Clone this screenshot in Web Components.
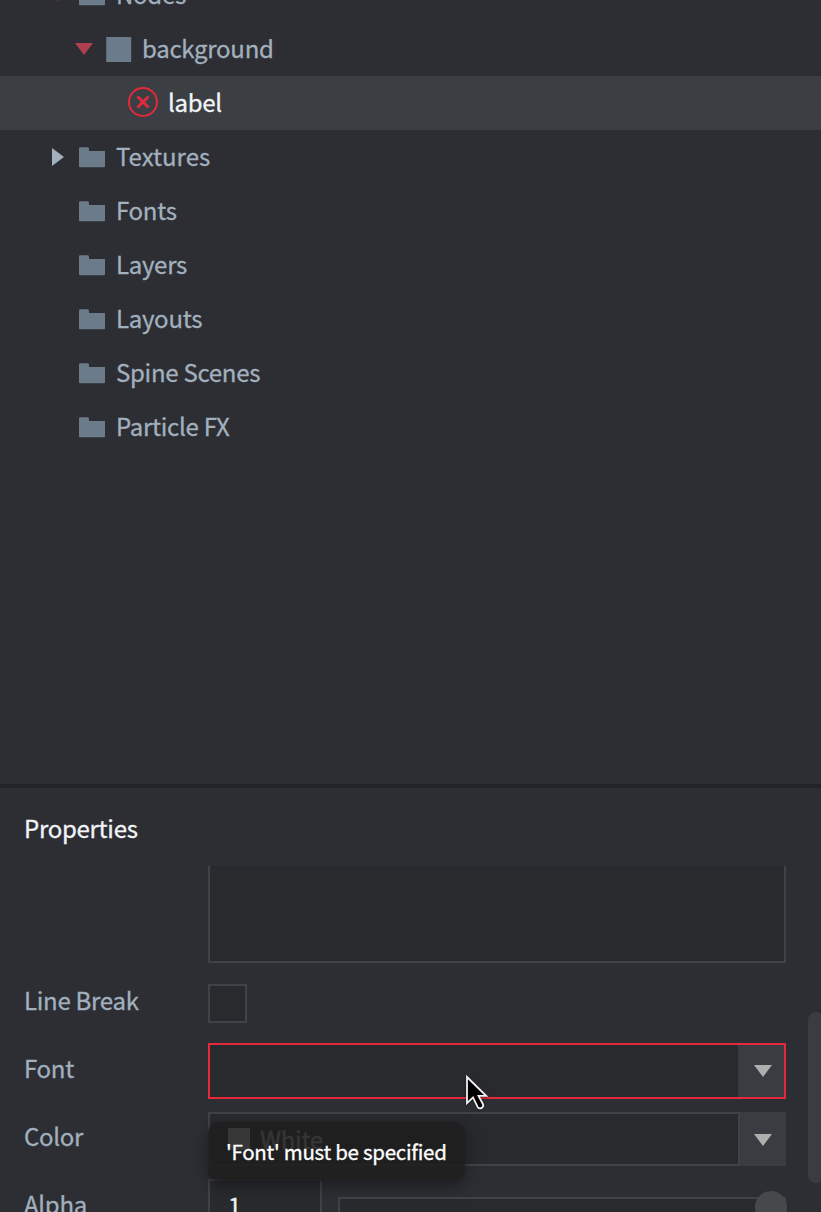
<!DOCTYPE html>
<html lang="en">
<head>
<meta charset="utf-8">
<title>Outline and Properties</title>
<style>
  html, body { margin: 0; height: 100%; overflow: hidden; background: #2d2e33; }
  body { font: 24px/54px "Noto Sans CJK SC", "Noto Sans", sans-serif; color: #a2b0be; letter-spacing: -.28px; -webkit-text-stroke: .3px currentColor; }
</style>
</head>
<body>
<editor-app></editor-app>
<script>
const define = (name, html, setup) => customElements.define(name, class extends HTMLElement {
  constructor() {
    super();
    this.attachShadow({ mode: "open" }).innerHTML = html;
  }
  connectedCallback() { if (setup) setup(this, this.shadowRoot); }
});

const glyphs = {
  folder: '<svg width="26" height="21" viewBox="0 0 26 21"><path fill="#6b7b8a" d="M0 1.4Q0 .3 1.2 .3H8.6Q9.7 .3 9.9 1.6L10.1 4H26V19.2Q26 20.3 25 20.3H1Q0 20.3 0 19.2Z"/></svg>',
  box: '<svg width="26" height="25" viewBox="0 0 26 25"><path fill="#6b7b8a" d="M.2 0H25.2V25H.2Z"/></svg>',
  error: '<svg width="30" height="30" viewBox="0 0 30 30" fill="none" stroke="#e4293b"><circle cx="15" cy="15" r="14" stroke-width="2"/><path stroke-width="2.8" stroke-linecap="round" d="M10.2 10.2l9.6 9.6M19.8 10.2l-9.6 9.6"/></svg>'
};

define("node-icon", '<style>:host{display:flex;flex:none}svg{display:block}</style>',
  (el, root) => root.innerHTML += glyphs[el.getAttribute("kind")]);

define("fold-arrow", `<style>
  :host{display:flex;width:18px;height:18px;align-items:center;justify-content:center;flex:none;color:#a2b0be}
  :host([tone=error]){color:#b04050}
  :host([tone=field]){color:#aeaeae}
  svg{display:none}
  :host([dir=down]) .d,:host([dir=right]) .r{display:block}
</style><svg class="d" width="18" height="12"><path fill="currentColor" d="M0 0H18L9 12Z"/></svg>
<svg class="r" width="12" height="18"><path fill="currentColor" d="M0 0L12 9L0 18Z"/></svg>`);

define("tree-item", `<style>
  :host{display:flex;height:54px;align-items:center;box-sizing:border-box;padding-left:calc(49px + var(--depth,0)*26px)}
  :host([selected]){background:#3b3e42;color:#f2f4f7}
  :host([wide]){letter-spacing:0}
  fold-arrow{margin-right:12px}
  .name{margin-left:11px;line-height:52px;height:54px;white-space:nowrap}
  :host([selected]) .name{margin-left:10px}
  node-icon{padding-top:1px}
  :host([kind=error]) node-icon{margin-left:-3px;padding:0 0 2px}
  :host([kind=box]) node-icon{margin-left:1px;padding:0}
  :host([kind=box]) .name{margin-left:10px}
</style><fold-arrow></fold-arrow><span class="icon"></span><span class="name"><slot></slot></span>`,
  (el, root) => {
    el.style.setProperty("--depth", el.getAttribute("depth") || 0);
    const arrow = root.querySelector("fold-arrow");
    if (el.hasAttribute("fold")) arrow.setAttribute("dir", el.getAttribute("fold"));
    if (el.hasAttribute("tone")) arrow.setAttribute("tone", el.getAttribute("tone"));
    const icon = document.createElement("node-icon");
    icon.setAttribute("kind", el.getAttribute("kind") || "folder");
    root.querySelector(".icon").replaceWith(icon);
  });

define("outline-tree", `<style>
  :host{display:flex;flex-direction:column;justify-content:flex-start;height:784px;overflow:hidden}
  .list{margin-top:-32px}
</style><div class="list">
  <tree-item fold="down" tone="error">Nodes</tree-item>
  <tree-item depth="1" fold="down" tone="error" kind="box">background</tree-item>
  <tree-item depth="2" kind="error" selected>label</tree-item>
  <tree-item fold="right" wide>Textures</tree-item>
  <tree-item>Fonts</tree-item>
  <tree-item>Layers</tree-item>
  <tree-item>Layouts</tree-item>
  <tree-item>Spine Scenes</tree-item>
  <tree-item>Particle FX</tree-item>
</div>`);

define("property-row", `<style>
  :host{display:grid;grid-template-columns:184px 578px;padding-left:24px;height:68px;align-items:start}
  .label{line-height:50px;height:50px}
</style><span class="label"></span><slot></slot>`,
  (el, root) => root.querySelector(".label").textContent = el.getAttribute("label") || "");

define("choice-field", `<style>
  :host{display:flex;box-sizing:border-box;height:54px;border:2px solid #404247;background:#292a2e;color:#e8e8e8}
  :host([invalid]){height:56px;border-color:#e4293b}
  .value{flex:1;display:flex;align-items:center;padding-left:18px;line-height:48px}
  .button{display:flex;width:46px;align-items:center;justify-content:center;background:#393c40;padding-left:2px;box-sizing:border-box}
  :host(:not([invalid])) .button{border-left:2px solid #404247;margin:-2px;width:48px;padding:1px 2px 0 0}
  fold-arrow{margin-left:1px}
</style><div class="value"><slot></slot></div><div class="button"><fold-arrow dir="down" tone="field"></fold-arrow></div>`);

define("color-swatch", '<style>:host{display:block;width:22px;height:22px;background:#fff;margin-right:10px}</style>');
define("check-box", '<style>:host{display:block;box-sizing:border-box;width:39px;height:39px;border:2px solid #404247;background:#292a2e}</style>');
define("text-area", '<style>:host{display:block;box-sizing:border-box;height:97px;border:2px solid #404247;border-top:0;background:#292a2e}</style>');

define("alpha-slider", `<style>
  :host{display:flex;align-items:flex-start}
  .num{box-sizing:border-box;width:114px;height:54px;border:2px solid #404247;background:#292a2e;color:#f0f2f5;padding-left:18px;line-height:48px}
  .track{box-sizing:border-box;flex:1;height:20px;margin:18px 0 0 16px;border:2px solid #404247;background:#292a2e;display:flex;align-items:center;justify-content:flex-end}
  .knob{width:32px;height:32px;border-radius:50%;background:#47484b;margin-right:-3px;flex:none}
</style><div class="num">1</div><div class="track"><div class="knob"></div></div>`);

define("hint-tip", `<style>
  :host{position:absolute;left:208px;top:1122px;width:257px;height:59px;box-sizing:border-box;padding-left:18px;border-radius:11px;background:rgba(30,30,30,.89);box-shadow:0 5px 16px rgba(0,0,0,.38);color:#fff;font-size:20.5px;line-height:58px;white-space:nowrap}
</style><slot></slot>`);

define("mouse-pointer", `<style>:host{position:absolute;left:462px;top:1072px}svg{display:block;filter:drop-shadow(0 1px 1px rgba(0,0,0,.45))}</style>
<svg width="32" height="42" viewBox="0 0 32 42"><path fill="#000" stroke="#f2f2f2" stroke-width="1.8" d="M5 5V31.2L11 25.4L15.6 34.9Q17.3 37.3 19.8 35.9Q21.9 34.5 21 32.2L16.5 23.9H24.2Z"/></svg>`);

define("properties-panel", `<style>
  :host{display:flex;flex-direction:column;height:424px;overflow:hidden;border-top:4px solid #232428;position:relative;box-sizing:content-box}
  h2{margin:0;font:inherit;color:#f2f4f7;padding-left:24px;height:78px;line-height:79px;flex:none}
  .scroll{display:grid;grid-template-columns:808px 16px;overflow:hidden;flex:1}
  .rows{display:flex;flex-direction:column}
  .thumb{width:16px;height:171px;border-radius:8px;background:#393c40;margin-top:146px}
  property-row{flex:none}
  .area{height:109px} .break{height:68px}
  .break check-box{margin-top:9px}
  .color choice-field{margin-top:1px}
</style>
<h2>Properties</h2>
<div class="scroll"><div class="rows">
  <property-row class="area"><text-area></text-area></property-row>
  <property-row class="break" label="Line Break"><check-box></check-box></property-row>
  <property-row class="font" label="Font"><choice-field invalid></choice-field></property-row>
  <property-row class="color" label="Color"><choice-field><color-swatch></color-swatch>White</choice-field></property-row>
  <property-row class="alpha" label="Alpha"><alpha-slider></alpha-slider></property-row>
</div><div class="thumb"></div></div>`);

define("editor-app", `<style>
  :host{display:flex;flex-direction:column;width:821px;height:1212px;overflow:hidden;position:relative;background:#2d2e33}
</style>
<outline-tree></outline-tree><properties-panel></properties-panel>
<hint-tip>'Font' must be specified</hint-tip><mouse-pointer></mouse-pointer>`);
</script>
</body>
</html>
